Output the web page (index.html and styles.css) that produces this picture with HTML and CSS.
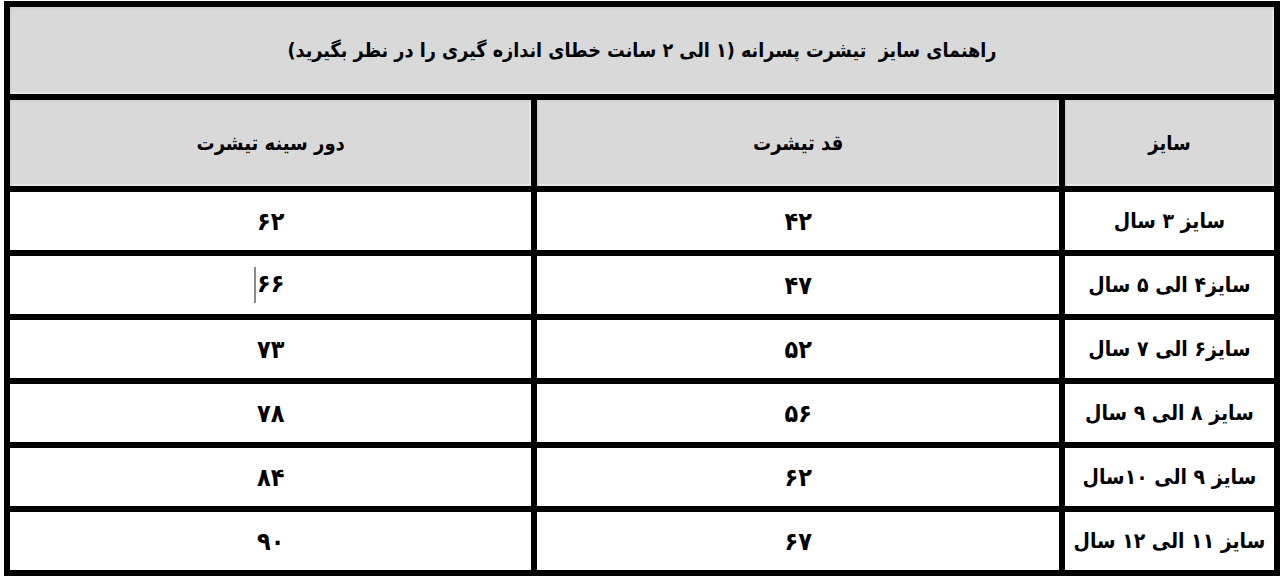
FILE: index.html
```html
<!DOCTYPE html>
<html lang="fa" dir="rtl">
<head>
<meta charset="utf-8">
<title>راهنمای سایز تیشرت پسرانه</title>
<link rel="stylesheet" href="styles.css">
</head>
<body>
<table class="chart">
  <colgroup>
    <col class="col-size">
    <col class="col-len">
    <col class="col-chest">
  </colgroup>
  <thead>
    <tr class="row-title">
      <th colspan="3" class="cell-title">راهنمای سایز&nbsp; تیشرت پسرانه (۱ الی ۲ سانت خطای اندازه گیری را در نظر بگیرید)</th>
    </tr>
    <tr class="row-head">
      <th class="cell-head">سایز</th>
      <th class="cell-head">قد تیشرت</th>
      <th class="cell-head">دور سینه تیشرت</th>
    </tr>
  </thead>
  <tbody>
    <tr><td class="label">سایز ۳ سال</td><td class="num">۴۲</td><td class="num">۶۲</td></tr>
    <tr><td class="label">سایز۴ الی ۵ سال</td><td class="num">۴۷</td><td class="num">۶۶<span class="caret"></span></td></tr>
    <tr><td class="label">سایز۶ الی ۷ سال</td><td class="num">۵۲</td><td class="num">۷۳</td></tr>
    <tr><td class="label">سایز ۸ الی ۹ سال</td><td class="num">۵۶</td><td class="num">۷۸</td></tr>
    <tr><td class="label">سایز ۹ الی ۱۰سال</td><td class="num">۶۲</td><td class="num">۸۴</td></tr>
    <tr><td class="label">سایز ۱۱ الی ۱۲ سال</td><td class="num">۶۷</td><td class="num">۹۰</td></tr>
  </tbody>
</table>
</body>
</html>
```

FILE: styles.css
```css
html, body {
  margin: 0;
  background: #ffffff;
}

body {
  padding: 1px 0 0 1px;
  font-family: "DejaVu Sans Condensed", "DejaVu Sans", sans-serif;
  color: #000;
}

.chart {
  width: 1276px;
  background: #000;
  border-collapse: separate;
  border-spacing: 6px;
  table-layout: fixed;
}

.col-size { width: 209px; }
.col-len { width: 521px; }
.col-chest { width: 521px; }

.chart th,
.chart td {
  padding: 0;
  text-align: center;
  vertical-align: middle;
  font-weight: bold;
  font-size: 21px;
  line-height: 1;
}

.chart th {
  background: #d9d9d9;
  box-shadow: inset 2px 2px 0 #d2d2d2, inset -2px -2px 0 #e6e6e6;
}

.chart td {
  background: #ffffff;
  height: 58px;
}

.row-title th { height: 87px; }
.row-head th { height: 86px; font-size: 20px; }

.chart th.cell-title { font-size: 19.6px; }

.chart td.num { font-size: 25px; }

.caret {
  display: inline-block;
  width: 0;
  height: 36px;
  border-left: 2px solid #8a8a8a;
  vertical-align: middle;
  margin-right: 1px;
  margin-left: -3px;
}
```
